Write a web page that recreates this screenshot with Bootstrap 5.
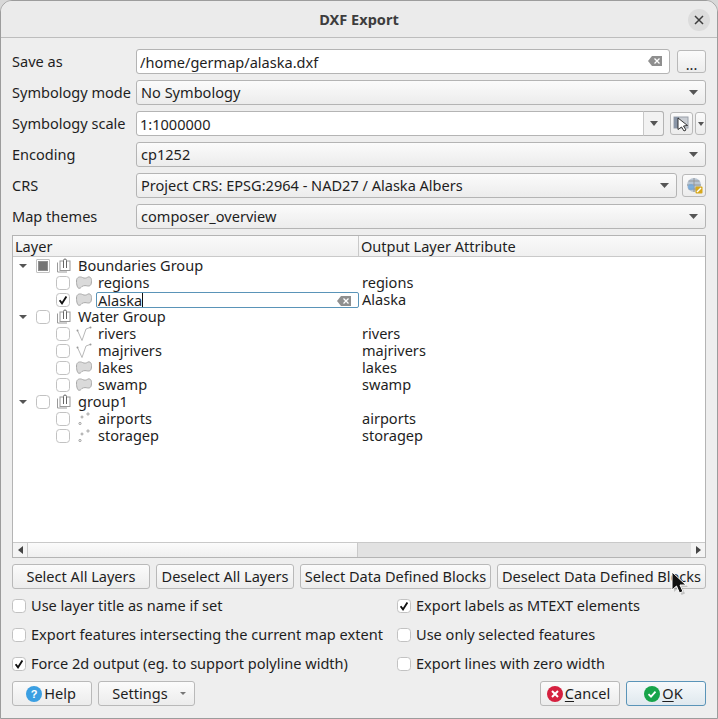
<!DOCTYPE html>
<html lang="en">
<head>
<meta charset="UTF-8">
<title>DXF Export</title>
<link href="https://cdn.jsdelivr.net/npm/bootstrap@5.3.0/dist/css/bootstrap.min.css" rel="stylesheet">
<style>
  html, body { height: 719px; overflow: hidden; background: #d8d8d8; }
  body { font-family: "Noto Sans", "Liberation Sans", sans-serif; font-size: 14.55px; color: #1e1e1e; line-height: 17px; }
  .dlg { width: 718px; height: 719px; background: #eeeeee; border: 1px solid #9c9c9c; border-radius: 12px 12px 0 0; position: relative; overflow: hidden; }
  .dlg-title { height: 37px; background: #ebebeb; border-bottom: 1px solid #bdbdbd; font-weight: 700; color: #3d3d3d; font-size: 14.55px; position: relative; }
  .dlg-close { position: absolute; right: 7px; top: 8px; width: 22px; height: 22px; border-radius: 50%; background: #dcdcdc; }
  .dlg-body { padding: 11px 11px 0 11px; }
  .frow { height: 25px; margin-bottom: 6px; }
  .flabel { width: 124px; flex: none; white-space: nowrap; }
  .qinput, .qselect { height: 25px; min-height: 0; padding: 0 3px; font-size: 14.55px; color: #1e1e1e; border: 1px solid #b4b4b4; border-radius: 3px; box-shadow: none; line-height: 23px; }
  .qselect { padding: 0 24px 0 4px; min-width: 0; background-color: #f4f4f4; background-image: url("data:image/svg+xml,%3Csvg xmlns='http://www.w3.org/2000/svg' width='9' height='5'%3E%3Cpath d='M0 0h9L4.5 5z' fill='%23555'/%3E%3C/svg%3E"), linear-gradient(#fbfbfb, #ececec); background-repeat: no-repeat; background-position: right 7px center, 0 0; background-size: 9px 5px, 100% 100%; }
  .qwrap { position: relative; }
  .qclear { position: absolute; right: 8px; top: 7px; }
  .qtool { height: 23px; flex: none; padding: 0; border: 1px solid #b9b9b9; border-radius: 3px; background: linear-gradient(#fbfbfb, #ececec); font-size: 14.55px; color: #1e1e1e; line-height: 14px; }
  .qtool-dots { width: 29px; margin-left: 7px; padding-top: 4px; }
  .qbtn { height: 25px; padding: 0; font-size: 14.55px; color: #1e1e1e; border: 1px solid #b9b9b9; border-radius: 3px; background: linear-gradient(#fbfbfb, #ececec); white-space: nowrap; line-height: 23px; }
  .qbtn u { text-underline-offset: 2px; }
  .scale-arrow { width: 21px; height: 25px; margin-left: -21px; border-left: 1px solid #c8c8c8; position: relative; background: #f2f2f2; border-radius: 0 3px 3px 0; border-right: 1px solid #b4b4b4; border-top: 1px solid #b4b4b4; border-bottom: 1px solid #b4b4b4; flex: none; }
  .tri { width: 0; height: 0; border-left: 4.5px solid transparent; border-right: 4.5px solid transparent; border-top: 5px solid #555; }
  .tree { height: 323px; background: #fff; border: 1px solid #b4b4b4; position: relative; }
  .tree-head { height: 21px; background: linear-gradient(#fafafa, #f0f0f0); border-bottom: 1px solid #c9c9c9; flex: none; }
  .th-a { width: 346px; padding-left: 2px; border-right: 1px solid #c9c9c9; line-height: 20px; }
  .th-b { padding-left: 2px; line-height: 20px; }
  .tree-rows { height: 285px; }
  .trow { height: 17px; }
  .tcell { width: 346px; flex: none; height: 17px; }
  .tval { padding-left: 3px; }
  .kbox { width: 14px; height: 14px; flex: none; margin: 0; border: 1px solid #c2c2c2; border-radius: 1px; background-color: #fff; background-size: 12px 12px; }
  .kbox:checked { background-color: #fff; border-color: #c2c2c2; background-image: url("data:image/svg+xml,%3Csvg xmlns='http://www.w3.org/2000/svg' viewBox='0 0 12 12'%3E%3Cpath d='M2.6 6.2l2.4 3.2 4.4-7' fill='none' stroke='%23111' stroke-width='1.9'/%3E%3C/svg%3E"); }
  .kbox.tristate { position: relative; display: block; }
  .kbox.tristate::after { content: ""; position: absolute; left: 1px; top: 1px; width: 10px; height: 10px; background: #757575; border: 1px solid #8f8f8f; }
  .lvl0 { padding-left: 6px; }
  .lvl1 { padding-left: 43px; }
  .lvl0 .tri { border-width: 4.5px 4px 0; margin-right: 9px; }
  .lvl0 .kbox { margin-right: 7px; }
  .lvl0 .ico { margin-right: 7px; }
  .lvl1 .kbox { margin-right: 6px; }
  .lvl1 .ico { margin-right: 6px; }
  .ico { flex: none; }
  .lyr-edit { position: relative; width: 263px; height: 16px; border: 1px solid #5a94b8; border-radius: 2px; margin-left: -2px; padding-left: 1px; line-height: 14px; background: #fff; flex: none; }
  .lyr-edit i { display: inline-block; width: 1px; height: 14px; background: #111; vertical-align: top; }
  .lyr-clear { position: absolute; right: 7px; top: 3px; }
  .hbar { height: 15px; background: #e2e2e2; border-top: 1px solid #c9c9c9; }
  .hbar-btn { width: 14px; flex: none; background: #f4f4f4; }
  .hbar-thumb { width: 331px; flex: none; background: linear-gradient(#fbfbfb, #efefef); border-left: 1px solid #c9c9c9; border-right: 1px solid #c9c9c9; }
  .btnrow { margin-top: 6px; gap: 6px; }
  .checks { margin-top: 8px; grid-template-columns: 385px 1fr; row-gap: 12px; }
  .chk { height: 17px; white-space: nowrap; }
  .chk .kbox { margin-right: 5px; }
  .footrow { margin-top: 9px; }
  .qbtn.qok { border-color: #5a94b8; background: linear-gradient(#f6f9fb, #dfe8ee); }
  .tight { gap: 2px; }
  .mouse { position: absolute; left: 669px; top: 570px; pointer-events: none; }
</style>
</head>
<body>
<svg width="0" height="0" class="position-absolute">
  <defs>
    <symbol id="i-poly" viewBox="0 0 16 14"><path d="M.5 5C.5 .8 4 .3 6.500 1.500c2 1 3.500.8 5-.2 2-1.200 4 .2 4 3.200 0 4-.8 5.500-3.200 5.500-1.500 0-2.500-.7-4.800-.2-2.500.5-2 2.500-4.500 2.500C1.500 12.300.5 9 .5 5z" fill="#dadada" stroke="#a8a8a8" stroke-width="1"/></symbol>
    <symbol id="i-line" viewBox="0 0 16 16"><path d="M1.500 4.500l4.500 10 4-11.500 4-1.500" fill="none" stroke="#b8b8b8" stroke-width="1"/><circle cx="1.500" cy="4.500" r="1" fill="#999"/><circle cx="14.500" cy="1.500" r="1" fill="#999"/></symbol>
    <symbol id="i-pts" viewBox="0 0 16 14"><circle cx="4" cy="11.500" r="1.100" fill="none" stroke="#a0a0a0"/><circle cx="6" cy="5" r="1" fill="none" stroke="#a0a0a0"/><circle cx="12" cy="2" r="1.100" fill="none" stroke="#a0a0a0"/></symbol>
    <symbol id="i-grp" viewBox="0 0 14 15"><path d="M.5 4.500v9.500h9.500" fill="none" stroke="#9a9a9a"/><rect x="3" y="3" width="10" height="9.500" fill="#fff" stroke="#9a9a9a"/><path d="M6.500 10V2.500a1.500 1.500 0 0 1 3 0V10" fill="#fff" stroke="#666"/></symbol>
    <symbol id="i-clear" viewBox="0 0 14 10"><path d="M4 0h10v10H4L0 5z" fill="#8f8f8f"/><path d="M6.500 2.500l5 5m0-5l-5 5" stroke="#fff" stroke-width="1.300"/></symbol>
  </defs>
</svg>
<div class="dlg">
  <div class="dlg-title d-flex align-items-center justify-content-center">
    DXF Export
    <span class="dlg-close d-flex align-items-center justify-content-center">
      <svg width="10" height="10" viewBox="0 0 10 10"><path d="M1 1l8 8M9 1l-8 8" stroke="#3d3d3d" stroke-width="1.500"/></svg>
    </span>
  </div>
  <div class="dlg-body">
    <div class="frow d-flex align-items-center">
      <label class="flabel">Save as</label>
      <div class="qwrap flex-grow-1">
        <input class="form-control qinput" type="text" value="/home/germap/alaska.dxf">
        <svg class="qclear" width="14" height="10"><use href="#i-clear"/></svg>
      </div>
      <button class="qtool qtool-dots" type="button">...</button>
    </div>
    <div class="frow d-flex align-items-center">
      <label class="flabel">Symbology mode</label>
      <select class="form-select qselect flex-grow-1"><option>No Symbology</option></select>
    </div>
    <div class="frow d-flex align-items-center tight">
      <label class="flabel" style="margin-right:-2px">Symbology scale</label>
      <div class="d-flex flex-grow-1" style="min-width:0;margin-right:4px">
        <input class="form-control qinput" type="text" value="1:1000000">
        <span class="scale-arrow d-flex align-items-center justify-content-center"><span class="tri"></span></span>
      </div>
      <button class="qtool d-flex align-items-center justify-content-center" style="width:23px" type="button">
        <svg width="18" height="16" viewBox="0 0 18 16"><rect x="1" y="1" width="14" height="11" fill="#c9cdd3" stroke="#9aa0aa"/><path d="M1 1h5v11H1z" fill="#8a95a6"/><path d="M5 2l9.500 7.500-4 .5 2.500 4-2 1-2.500-4L5 13.500z" fill="#fff" stroke="#222" stroke-width=".9"/></svg>
      </button>
      <button class="qtool d-flex align-items-center justify-content-center" style="width:11px" type="button"><span class="tri" style="border-width:4px 3.500px 0"></span></button>
    </div>
    <div class="frow d-flex align-items-center">
      <label class="flabel">Encoding</label>
      <select class="form-select qselect flex-grow-1"><option>cp1252</option></select>
    </div>
    <div class="frow d-flex align-items-center">
      <label class="flabel">CRS</label>
      <select class="form-select qselect flex-grow-1"><option>Project CRS: EPSG:2964 - NAD27 / Alaska Albers</option></select>
      <button class="qtool d-flex align-items-center justify-content-center" style="width:24px;margin-left:5px" type="button">
        <svg width="17" height="17" viewBox="0 0 17 17"><circle cx="8" cy="8" r="7" fill="#b9c6d4"/><path d="M1 8h14M8 1v14M2.500 4h11M2.500 12h11" stroke="#8d8d8d" stroke-width=".8"/><circle cx="5" cy="10" r="3" fill="#6fa8dc" opacity=".8"/><rect x="9.500" y="9.500" width="7" height="7" rx="1" fill="#d7a81c"/><path d="M11 15l4-4" stroke="#fff" stroke-width="1.500"/></svg>
      </button>
    </div>
    <div class="frow d-flex align-items-center">
      <label class="flabel">Map themes</label>
      <select class="form-select qselect flex-grow-1"><option>composer_overview</option></select>
    </div>

    <div class="tree d-flex flex-column">
      <div class="tree-head d-flex">
        <div class="th-a">Layer</div>
        <div class="th-b">Output Layer Attribute</div>
      </div>
      <div class="tree-rows flex-grow-1" id="rows"></div>
      <div class="hbar d-flex">
        <div class="hbar-btn d-flex align-items-center justify-content-center"><svg width="5" height="8"><path d="M5 0v8L0 4z" fill="#444"/></svg></div>
        <div class="hbar-thumb"></div>
        <div class="flex-grow-1"></div>
        <div class="hbar-btn d-flex align-items-center justify-content-center"><svg width="5" height="8"><path d="M0 0v8l5-4z" fill="#444"/></svg></div>
      </div>
    </div>

    <div class="btnrow d-flex">
      <button class="btn qbtn" style="width:138px" type="button">Select All Layers</button>
      <button class="btn qbtn" style="width:138px" type="button">Deselect All Layers</button>
      <button class="btn qbtn" style="width:191px" type="button">Select Data Defined Blocks</button>
      <button class="btn qbtn flex-grow-1" type="button">Deselect Data Defined Blocks</button>
    </div>

    <div class="checks d-grid">
      <div class="chk d-flex align-items-center"><input class="form-check-input kbox" type="checkbox">Use layer title as name if set</div>
      <div class="chk d-flex align-items-center"><input class="form-check-input kbox" type="checkbox" checked>Export labels as MTEXT elements</div>
      <div class="chk d-flex align-items-center"><input class="form-check-input kbox" type="checkbox">Export features intersecting the current map extent</div>
      <div class="chk d-flex align-items-center"><input class="form-check-input kbox" type="checkbox">Use only selected features</div>
      <div class="chk d-flex align-items-center"><input class="form-check-input kbox" type="checkbox" checked>Force 2d output (eg. to support polyline width)</div>
      <div class="chk d-flex align-items-center"><input class="form-check-input kbox" type="checkbox">Export lines with zero width</div>
    </div>

    <div class="footrow d-flex">
      <button class="btn qbtn d-flex align-items-center justify-content-center tight" style="width:80px;padding-right:2px" type="button">
        <svg width="16" height="16" viewBox="0 0 16 16"><circle cx="8" cy="8" r="8" fill="#3b9fe2"/><text x="8" y="12" font-size="11" font-weight="700" text-anchor="middle" fill="#fff" font-family="Liberation Sans">?</text></svg>Help
      </button>
      <button class="btn qbtn d-flex align-items-center position-relative justify-content-center" style="width:97px;margin-left:6px;padding-right:13px" type="button">Settings
        <span class="tri position-absolute" style="right:8px;top:10px;border-width:3px 3px 0;border-top-color:#777"></span>
      </button>
      <div class="flex-grow-1"></div>
      <button class="btn qbtn d-flex align-items-center justify-content-center tight" style="width:80px;padding-right:3px" type="button">
        <svg width="16" height="16" viewBox="0 0 16 16"><circle cx="8" cy="8" r="8" fill="#d5203f"/><path d="M5 5l6 6M11 5l-6 6" stroke="#fff" stroke-width="2"/></svg><span><u>C</u>ancel</span>
      </button>
      <button class="btn qbtn qok d-flex align-items-center justify-content-center tight" style="width:80px;margin-left:6px;padding-right:5px" type="button">
        <svg width="16" height="16" viewBox="0 0 16 16"><circle cx="8" cy="8" r="8" fill="#17a44a"/><path d="M4.500 8.200l2.500 2.500 4.500-5" fill="none" stroke="#fff" stroke-width="1.800"/></svg><span><u>O</u>K</span>
      </button>
    </div>
  </div>
  <svg class="mouse" width="18" height="26" viewBox="0 0 18 26">
    <path d="M3 2v18l4.500-4 3 7 3.500-1.500-3-6.500h6z" fill="#000" opacity=".18" transform="translate(1 1)"/>
    <path d="M2 1v18l4.500-4 3 7 3.500-1.500-3-6.500h6z" fill="#111" stroke="#fff" stroke-width="1"/>
  </svg>
</div>
<script>
  // layer tree rows: [level, state, icon, name, output]
  const layers = [
    [0, 'tri', 'grp', 'Boundaries Group', ''],
    [1, '', 'poly', 'regions', 'regions'],
    [1, 'on', 'poly', 'Alaska', 'Alaska', true],
    [0, '', 'grp', 'Water Group', ''],
    [1, '', 'line', 'rivers', 'rivers'],
    [1, '', 'line', 'majrivers', 'majrivers'],
    [1, '', 'poly', 'lakes', 'lakes'],
    [1, '', 'poly', 'swamp', 'swamp'],
    [0, '', 'grp', 'group1', ''],
    [1, '', 'pts', 'airports', 'airports'],
    [1, '', 'pts', 'storagep', 'storagep']
  ];
  const sizes = { grp: [14, 15], poly: [16, 14], line: [16, 16], pts: [16, 14] };
  document.getElementById('rows').innerHTML = layers.map(([lvl, st, ic, name, out, edit]) => {
    const box = st === 'tri'
      ? '<span class="kbox tristate"></span>'
      : `<input class="form-check-input kbox" type="checkbox"${st === 'on' ? ' checked' : ''}>`;
    const label = edit
      ? `<span class="lyr-edit">${name}<i></i><svg class="lyr-clear" width="14" height="10"><use href="#i-clear"/></svg></span>`
      : `<span>${name}</span>`;
    const [w, h] = sizes[ic];
    return `<div class="trow d-flex align-items-center">
      <div class="tcell d-flex align-items-center lvl${lvl}">${lvl === 0 ? '<span class="tri"></span>' : ''}${box}
      <svg class="ico" width="${w}" height="${h}"><use href="#i-${ic}"/></svg>${label}</div>
      <div class="tval">${out}</div></div>`;
  }).join('');
</script>
<script src="https://cdn.jsdelivr.net/npm/bootstrap@5.3.0/dist/js/bootstrap.bundle.min.js"></script>
</body>
</html>
